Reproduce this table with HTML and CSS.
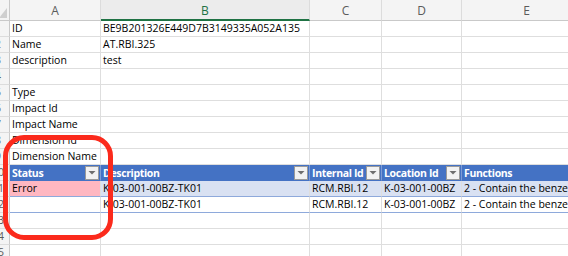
FILE: index.html
```html
<!DOCTYPE html>
<html>
<head>
<meta charset="utf-8">
<link rel="stylesheet" href="styles.css">
</head>
<body>
<div class="sheet">
  <div class="grid">
    <!-- column headers -->
    <div class="colhead corner"><span class="selall"></span></div>
    <div class="colhead">A</div>
    <div class="colhead active">B</div>
    <div class="colhead">C</div>
    <div class="colhead">D</div>
    <div class="colhead">E</div>

    <!-- 1 -->
    <div class="rowhead"><span>1</span></div>
    <div class="cell">ID</div>
    <div class="cell">BE9B201326E449D7B3149335A052A135</div>
    <div class="cell"></div><div class="cell"></div><div class="cell"></div>
    <!-- 2 -->
    <div class="rowhead"><span>2</span></div>
    <div class="cell">Name</div>
    <div class="cell">AT.RBI.325</div>
    <div class="cell"></div><div class="cell"></div><div class="cell"></div>
    <!-- 3 -->
    <div class="rowhead"><span>3</span></div>
    <div class="cell">description</div>
    <div class="cell">test</div>
    <div class="cell"></div><div class="cell"></div><div class="cell"></div>
    <!-- 4 -->
    <div class="rowhead"><span>4</span></div>
    <div class="cell"></div><div class="cell"></div><div class="cell"></div><div class="cell"></div><div class="cell"></div>
    <!-- 5 -->
    <div class="rowhead"><span>5</span></div>
    <div class="cell">Type</div>
    <div class="cell"></div><div class="cell"></div><div class="cell"></div><div class="cell"></div>
    <!-- 6 -->
    <div class="rowhead"><span>6</span></div>
    <div class="cell">Impact Id</div>
    <div class="cell"></div><div class="cell"></div><div class="cell"></div><div class="cell"></div>
    <!-- 7 -->
    <div class="rowhead"><span>7</span></div>
    <div class="cell">Impact Name</div>
    <div class="cell"></div><div class="cell"></div><div class="cell"></div><div class="cell"></div>
    <!-- 8 -->
    <div class="rowhead"><span>8</span></div>
    <div class="cell">Dimension Id</div>
    <div class="cell"></div><div class="cell"></div><div class="cell"></div><div class="cell"></div>
    <!-- 9 -->
    <div class="rowhead"><span>9</span></div>
    <div class="cell">Dimension Name</div>
    <div class="cell"></div><div class="cell"></div><div class="cell"></div><div class="cell"></div>

    <!-- 10: table header -->
    <div class="rowhead"><span>10</span></div>
    <div class="cell th"><span class="label">Status</span><span class="filter"></span></div>
    <div class="cell th"><span class="label">Description</span><span class="filter"></span></div>
    <div class="cell th"><span class="label">Internal Id</span><span class="filter"></span></div>
    <div class="cell th"><span class="label">Location Id</span><span class="filter"></span></div>
    <div class="cell th"><span class="label">Functions</span></div>

    <!-- 11 -->
    <div class="rowhead"><span>11</span></div>
    <div class="cell td band error">Error</div>
    <div class="cell td band">K-03-001-00BZ-TK01</div>
    <div class="cell td band">RCM.RBI.12</div>
    <div class="cell td band">K-03-001-00BZ</div>
    <div class="cell td band">2 - Contain the benzene</div>

    <!-- 12 -->
    <div class="rowhead"><span>12</span></div>
    <div class="cell td"></div>
    <div class="cell td">K-03-001-00BZ-TK01</div>
    <div class="cell td">RCM.RBI.12</div>
    <div class="cell td">K-03-001-00BZ</div>
    <div class="cell td">2 - Contain the benzene</div>

    <!-- 13 -->
    <div class="rowhead"><span>13</span></div>
    <div class="cell"></div><div class="cell"></div><div class="cell"></div><div class="cell"></div><div class="cell"></div>
    <!-- 14 -->
    <div class="rowhead"><span>14</span></div>
    <div class="cell"></div><div class="cell"></div><div class="cell"></div><div class="cell"></div><div class="cell"></div>
    <!-- 15 -->
    <div class="rowhead"><span>15</span></div>
    <div class="cell"></div><div class="cell"></div><div class="cell"></div><div class="cell"></div><div class="cell"></div>
  </div>

  <!-- hand-drawn highlight around the Status column -->
  <div class="highlight"></div>
</div>
</body>
</html>
```

FILE: styles.css
```css
html, body {
  margin: 0;
  padding: 0;
  background: #ffffff;
  overflow: hidden;
}

.sheet {
  position: relative;
  width: 568px;
  height: 256px;
  overflow: hidden;
  font-family: "Open Sans", "Liberation Sans", sans-serif;
  font-size: 10.5px;
  color: #000;
}

.grid {
  display: grid;
  grid-template-columns: 10px 91px 209px 72px 80px 130px;
  grid-template-rows: 21px repeat(15, 16px);
}

/* column letters */
.colhead {
  box-sizing: border-box;
  background: #f4f4f4;
  border-right: 1px solid #dcdcdc;
  border-bottom: 1px solid #c9c9c9;
  color: #5b5b5b;
  font-size: 12px;
  display: flex;
  align-items: center;
  justify-content: center;
  padding-top: 1px;
}

.colhead.active {
  color: #1f7244;
  border-bottom: 2px solid #1f7244;
  background: #ececec;
}

.colhead.corner {
  position: relative;
  border-right-color: #c9c9c9;
}

.selall {
  position: absolute;
  right: 2px;
  bottom: 2px;
  width: 8px;
  height: 10px;
  background: #cfcfcf;
  clip-path: polygon(100% 0, 100% 100%, 0 100%);
}

/* row numbers, only the right part of the gutter is on screen */
.rowhead {
  box-sizing: border-box;
  background: #f4f4f4;
  border-right: 1px solid #c9c9c9;
  border-bottom: 1px solid #dcdcdc;
  overflow: hidden;
  display: flex;
  justify-content: flex-end;
}

.rowhead span {
  flex: 0 0 22px;
  text-align: center;
  color: #5b5b5b;
  font-size: 10.5px;
  line-height: 15px;
}

/* ordinary cells */
.cell {
  box-sizing: border-box;
  border-right: 1px solid #dedede;
  border-bottom: 1px solid #dedede;
  padding: 0 2px 0 2px;
  white-space: nowrap;
  overflow: hidden;
  display: flex;
  align-items: flex-end;
  line-height: 14px;
  padding-bottom: 1px;
}

/* table header row */
.cell.th {
  background: #4472c4;
  color: #ffffff;
  font-weight: 700;
  letter-spacing: -0.35px;
  border-right: 1px solid #7d9bd6;
  border-bottom: 1px solid #4472c4;
  justify-content: space-between;
  align-items: center;
  padding: 0 1px 0 2px;
}

.filter {
  position: relative;
  flex: 0 0 14px;
  height: 14px;
  box-sizing: border-box;
  background: #f2f2f2;
  border: 1px solid #9a9a9a;
}

.filter::after {
  content: "";
  position: absolute;
  left: 2px;
  top: 4px;
  width: 8px;
  height: 4px;
  background: #6e6e6e;
  clip-path: polygon(0 0, 100% 0, 50% 100%);
}

/* table body rows */
.cell.td {
  border-bottom: 1px solid #8ea9db;
}

.cell.band {
  background: #d9e1f2;
}

.cell.error {
  background: #ffb7c1;
}

/* red marker ring drawn over the sheet */
.highlight {
  position: absolute;
  left: 3px;
  top: 135px;
  width: 110px;
  height: 105px;
  box-sizing: border-box;
  border: 5px solid #fb2a1c;
  border-radius: 21px;
  pointer-events: none;
}
```
